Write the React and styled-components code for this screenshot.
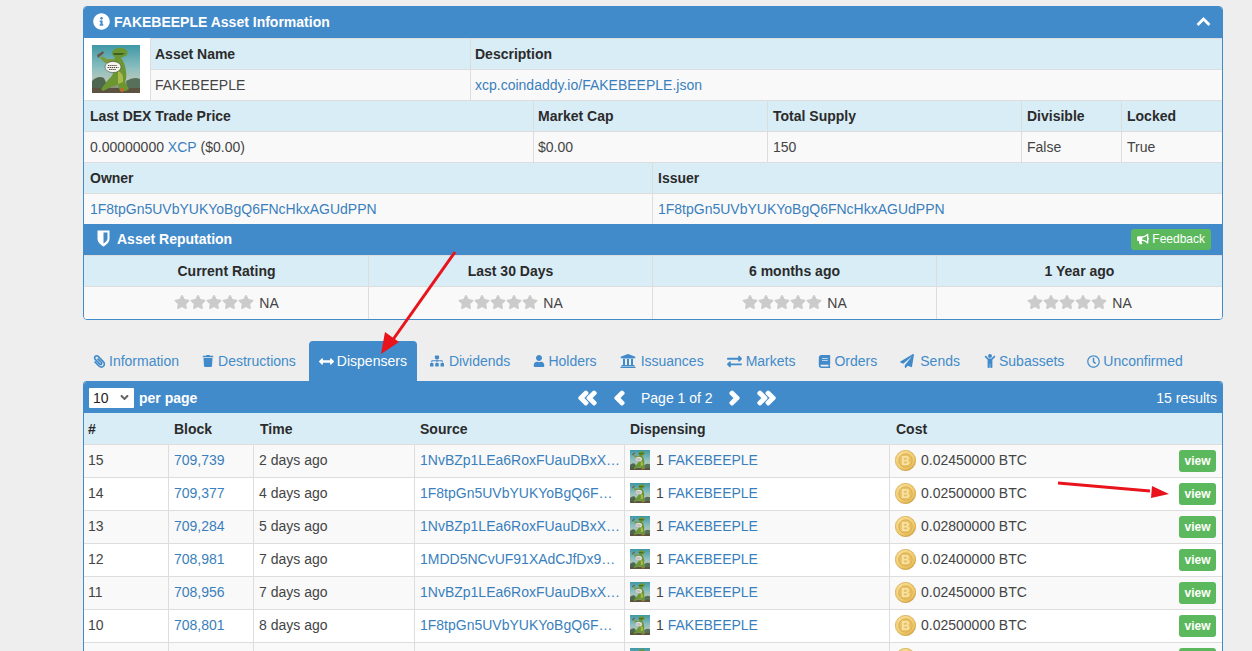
import React from 'react';
import styled, { createGlobalStyle } from 'styled-components';
import {
  FaInfoCircle, FaChevronUp, FaBullhorn, FaStar, FaPaperclip, FaTrash, FaArrowsAltH,
  FaSitemap, FaUser, FaUniversity, FaExchangeAlt, FaBook, FaPaperPlane, FaChild, FaRegClock,
  FaAngleDoubleLeft, FaAngleDoubleRight, FaAngleLeft, FaAngleRight, FaAngleDown,
} from 'react-icons/fa';

const GlobalStyle = createGlobalStyle`
  html, body {
    margin: 0;
    height: 651px;
    overflow: hidden;
    background: #eeeeee;
    font-family: "Liberation Sans", Arial, sans-serif;
    font-size: 14px;
    color: #333;
  }
  * { box-sizing: border-box; }
`;

const Page = styled.div`
  position: relative;
  padding: 6px 29px 0 83px;
  height: 651px;
  overflow: hidden;
`;

const Panel = styled.div`
  border: 1px solid #428bca;
  border-radius: 4px;
  background: #fff;
  overflow: hidden;
`;

const PanelHead = styled.div`
  display: flex;
  align-items: center;
  justify-content: space-between;
  height: ${(p) => p.$h || 31}px;
  padding: ${(p) => p.$pad || '0 10px 0 9px'};
  background: #428bca;
  color: #fff;
  font-weight: bold;
`;

const HeadTitle = styled.div`
  display: flex;
  align-items: center;
  gap: ${(p) => p.$gap || 4}px;
  padding-bottom: 2px;
  svg { font-size: 17px; }
`;

const Collapse = styled.span`
  display: flex;
  margin-right: 1px;
  padding-bottom: 2px;
  font-size: 15px;
  svg { stroke: #fff; stroke-width: 25; }
`;

const FeedbackBtn = styled.span`
  display: flex;
  align-items: center;
  gap: 3px;
  height: 21px;
  margin-bottom: 1px;
  padding: 0 6px;
  background: #5cb85c;
  border-radius: 3px;
  font-size: 12px;
  font-weight: normal;
  svg { font-size: 12px; }
`;

const Row = styled.div`
  display: grid;
  grid-template-columns: ${(p) => p.$cols};
  height: ${(p) => p.$h || 31}px;
`;

const Cell = styled.div`
  display: flex;
  align-items: center;
  justify-content: ${(p) => (p.$center ? 'center' : 'flex-start')};
  padding: 0 ${(p) => p.$padX ?? 5}px;
  background: ${(p) => (p.$head ? '#d9edf7' : '#f9f9f9')};
  font-weight: ${(p) => (p.$head ? 'bold' : 'normal')};
  color: ${(p) => (p.$head ? '#2b2b2b' : '#444')};
  border-top: 1px solid #dddddd;
  border-left: 1px solid ${(p) => (p.$first ? 'transparent' : '#dddddd')};
  white-space: pre;
`;

const Link = styled.span`
  color: #3a7fbd;
`;

const TopBlock = styled.div`
  display: grid;
  grid-template-columns: 66px 1fr;
`;

const ThumbCell = styled.div`
  display: flex;
  align-items: center;
  justify-content: center;
  height: 62px;
  padding-right: 2px;
  background: #fff;
`;

const Stars = styled.span`
  display: inline-flex;
  margin: 0 5px 3px 0;
  color: #cbcbcb;
  svg { font-size: 16px; width: 16px; }
`;

const Tabs = styled.nav`
  display: flex;
  gap: 3px;
  margin-top: 21px;
  height: 40px;
`;

const Tab = styled.div`
  display: flex;
  align-items: center;
  padding: 0 10px;
  border-radius: 4px 4px 0 0;
  background: ${(p) => (p.$active ? '#428bca' : 'transparent')};
  color: ${(p) => (p.$active ? '#fff' : '#428bca')};
`;

const TabIcon = styled.span`
  display: flex;
  flex: none;
  width: ${(p) => p.$lead}px;
  svg {
    font-size: ${(p) => p.$size || 13}px;
    transform: ${(p) => (p.$flip ? 'scaleX(-1)' : 'none')};
  }
`;

const ListPanel = styled(Panel)`
  border-bottom: 0;
  border-radius: 4px 4px 0 0;
`;

const ListHead = styled(PanelHead)`
  display: grid;
  grid-template-columns: 488px auto 1fr;
  font-weight: normal;
`;

const PerPage = styled.div`
  display: flex;
  align-items: center;
  gap: 5px;
  font-weight: bold;
`;

const FakeSelect = styled.div`
  display: flex;
  align-items: center;
  justify-content: space-between;
  width: 45px;
  height: 20px;
  padding: 0 3px 0 4px;
  background: #fff;
  border-radius: 1px;
  color: #222;
  font-weight: normal;
  svg { font-size: 13px; color: #666; }
`;

const Pager = styled.div`
  display: flex;
  align-items: center;
  gap: 16px;
`;

const PagerIcon = styled.span`
  display: flex;
  justify-content: center;
  width: ${(p) => p.$w}px;
  svg { font-size: 22px; stroke: #fff; stroke-width: 34; }
`;

const Results = styled.div`
  text-align: right;
`;

const Columns = '84px 85px 161px 210px 265px 1fr';

const DataRow = styled.div`
  display: grid;
  grid-template-columns: ${Columns};
  height: 33px;
  background: ${(p) => (p.$striped ? '#f9f9f9' : '#fff')};
  border-top: 1px solid #dddddd;
`;

const HeadRow = styled.div`
  display: grid;
  grid-template-columns: ${Columns};
  height: 31px;
  background: #d9edf7;
  font-weight: bold;
  color: #2b2b2b;
`;

const HeadCell = styled.div`
  display: flex;
  align-items: center;
  padding-left: ${(p) => p.$pad ?? 6}px;
`;

const DataCell = styled.div`
  display: flex;
  align-items: center;
  gap: 6px;
  min-width: 0;
  padding: 0 ${(p) => p.$padEnd ?? 6}px 2px ${(p) => p.$pad ?? 5}px;
  color: #444;
  white-space: nowrap;
  border-left: ${(p) => (p.$line ? '1px solid #dddddd' : '0')};
`;

const Truncate = styled(Link)`
  overflow: hidden;
  text-overflow: ellipsis;
`;

const ViewBtn = styled.span`
  display: flex;
  align-items: center;
  justify-content: center;
  flex: none;
  width: 37px;
  height: 22px;
  margin: 2px 0 0 auto;
  background: #5cb85c;
  border-radius: 3px;
  color: #fff;
  font-size: 12px;
  font-weight: bold;
`;

const ArrowLayer = styled.svg`
  position: absolute;
  inset: 0;
  pointer-events: none;
`;

const ShieldIcon = () => (
  <svg width="13" height="17" viewBox="0 0 13 17">
    <path d="M0.5 0.5 H12.5 V8.5 C12.5 12.5 9 15 6.5 16.5 C4 15 0.5 12.5 0.5 8.5Z" fill="#fff" />
    <path d="M6.5 2.5 H10.5 V8.5 C10.5 10.5 8.5 12.4 6.5 13.6Z" fill="#428bca" />
  </svg>
);

const Thumb = ({ size }) => (
  <svg width={size} height={size} viewBox="0 0 48 48" style={{ flex: 'none' }}>
    <defs>
      <linearGradient id="sky" x1="0" y1="0" x2="0" y2="1">
        <stop offset="0" stopColor="#3f98a6" />
        <stop offset="0.5" stopColor="#8fc0c0" />
        <stop offset="0.72" stopColor="#b4c6b8" />
        <stop offset="1" stopColor="#6d6a52" />
      </linearGradient>
    </defs>
    <rect width="48" height="48" fill="url(#sky)" />
    <path d="M0 36 Q6 30 12 33 L15 40 L10 48 L0 48Z" fill="#4f6750" />
    <path d="M34 36 Q42 31 48 34 V48 H36Z" fill="#56705a" />
    <path d="M0 43 H48 V48 H0Z" fill="#5b5340" />
    <path d="M20 7 Q23 2 31 3 Q37 5 35 10 L29 13 Q33 18 34 26 Q35 33 33 37 L37 44 Q34 47 28 46 L26 40 L19 42 L11 46 L9 44 L16 35 Q22 30 22 23 L21 17 L23 12 Q20 11 20 7Z" fill="#6b9632" />
    <path d="M26 26 Q32 28 31 37 L26 39Z" fill="#a9bb4c" />
    <path d="M22 18 L13 18 L8 13 L10 11 L15 14 L23 14Z" fill="#7c9a3e" />
    <path d="M5 10 L11 6 L12 8 L6 13Z" fill="#6a5744" />
    <path d="M21 8 L33 8 L30 10 L22 10Z" fill="#3e6022" />
    <ellipse cx="21" cy="22" rx="8" ry="5.6" fill="#f6f3ea" stroke="#333" strokeWidth="0.5" />
    <path d="M16 20.5h9M15.5 22.5h11M17 24.5h7" stroke="#333" strokeWidth="0.9" strokeDasharray="1.4 0.7" />
    <circle cx="30" cy="45" r="2" fill="#c8662a" />
  </svg>
);

const Coin = () => (
  <svg width="21" height="21" viewBox="0 0 21 21" style={{ flex: 'none', marginRight: -1 }}>
    <defs>
      <radialGradient id="gold" cx="0.4" cy="0.35" r="0.75">
        <stop offset="0" stopColor="#fbe7a8" />
        <stop offset="0.7" stopColor="#efca6c" />
        <stop offset="1" stopColor="#c99632" />
      </radialGradient>
    </defs>
    <circle cx="10.5" cy="10.5" r="10.2" fill="url(#gold)" stroke="#c2902f" strokeWidth="0.5" />
    <circle cx="10.5" cy="10.5" r="6.8" fill="#e9c064" stroke="#d3a344" strokeWidth="0.7" />
    <text x="10.5" y="14.6" textAnchor="middle" fontSize="12" fontWeight="bold" fontFamily="Liberation Sans" fill="#f8e4a6">B</text>
  </svg>
);

// lead = distance from the icon's left edge to the label
const tabs = [
  { label: 'Information', Icon: FaPaperclip, lead: 16, flip: true },
  { label: 'Destructions', Icon: FaTrash, lead: 16, size: 12 },
  { label: 'Dispensers', Icon: FaArrowsAltH, lead: 18, size: 15, active: true },
  { label: 'Dividends', Icon: FaSitemap, lead: 19, size: 14 },
  { label: 'Holders', Icon: FaUser, lead: 15, size: 12 },
  { label: 'Issuances', Icon: FaUniversity, lead: 21, size: 16 },
  { label: 'Markets', Icon: FaExchangeAlt, lead: 19, size: 15 },
  { label: 'Orders', Icon: FaBook, lead: 16, size: 13 },
  { label: 'Sends', Icon: FaPaperPlane, lead: 20, size: 14 },
  { label: 'Subassets', Icon: FaChild, lead: 16, size: 14 },
  { label: 'Unconfirmed', Icon: FaRegClock, lead: 16, size: 13 },
];

const NV = '1NvBZp1LEa6RoxFUauDBxXRDnGj4ZXzNQs';
const F8 = '1F8tpGn5UVbYUKYoBgQ6FNcHkxAGUdPPN';

const rows = [
  ['15', '709,739', '2 days ago', NV, '0.02450000'],
  ['14', '709,377', '4 days ago', F8, '0.02500000'],
  ['13', '709,284', '5 days ago', NV, '0.02800000'],
  ['12', '708,981', '7 days ago', '1MDD5NCvUF91XAdCJfDx9QhLYxZkR7Ngz', '0.02400000'],
  ['11', '708,956', '7 days ago', NV, '0.02450000'],
  ['10', '708,801', '8 days ago', F8, '0.02500000'],
  ['', '', '', '', ''],
];

const ratings = ['Current Rating', 'Last 30 Days', '6 months ago', '1 Year ago'];
const ratingCols = '284px 284px 284px 1fr';
const statCols = '449px 234px 254px 100px 1fr';

const App = () => (
  <>
    <GlobalStyle />
    <Page>
      <Panel>
        <PanelHead>
          <HeadTitle>
            <FaInfoCircle />
            FAKEBEEPLE Asset Information
          </HeadTitle>
          <Collapse><FaChevronUp /></Collapse>
        </PanelHead>
        <TopBlock>
          <ThumbCell><Thumb size={48} /></ThumbCell>
          <div>
            <Row $cols="320px 1fr">
              <Cell $head $padX={4}>Asset Name</Cell>
              <Cell $head $padX={4}>Description</Cell>
            </Row>
            <Row $cols="320px 1fr">
              <Cell $padX={4}>FAKEBEEPLE</Cell>
              <Cell $padX={4}><Link>xcp.coindaddy.io/FAKEBEEPLE.json</Link></Cell>
            </Row>
          </div>
        </TopBlock>
        <Row $cols={statCols}>
          <Cell $head $first>Last DEX Trade Price</Cell>
          <Cell $head $padX={4}>Market Cap</Cell>
          <Cell $head>Total Supply</Cell>
          <Cell $head>Divisible</Cell>
          <Cell $head>Locked</Cell>
        </Row>
        <Row $cols={statCols}>
          <Cell $first>0.00000000 <Link>XCP</Link> ($0.00)</Cell>
          <Cell $padX={4}>$0.00</Cell>
          <Cell>150</Cell>
          <Cell>False</Cell>
          <Cell>True</Cell>
        </Row>
        <Row $cols="568px 1fr">
          <Cell $head $first>Owner</Cell>
          <Cell $head>Issuer</Cell>
        </Row>
        <Row $cols="568px 1fr">
          <Cell $first><Link>{F8}</Link></Cell>
          <Cell><Link>{F8}</Link></Cell>
        </Row>
        <PanelHead $pad="0 11px 0 13px">
          <HeadTitle $gap={7}>
            <ShieldIcon />
            Asset Reputation
          </HeadTitle>
          <FeedbackBtn><FaBullhorn />Feedback</FeedbackBtn>
        </PanelHead>
        <Row $cols={ratingCols}>
          {ratings.map((r, i) => <Cell key={r} $head $center $first={i === 0}>{r}</Cell>)}
        </Row>
        <Row $cols={ratingCols} $h={33}>
          {ratings.map((r, i) => (
            <Cell key={r} $center $first={i === 0}>
              <Stars>{[0, 1, 2, 3, 4].map((s) => <FaStar key={s} />)}</Stars>
              NA
            </Cell>
          ))}
        </Row>
      </Panel>

      <Tabs>
        {tabs.map(({ label, Icon, lead, size, flip, active }) => (
          <Tab key={label} $active={active}>
            <TabIcon $lead={lead} $size={size} $flip={flip}><Icon /></TabIcon>
            {label}
          </Tab>
        ))}
      </Tabs>

      <ListPanel>
        <ListHead $pad="0 5px">
          <PerPage>
            <FakeSelect>10<FaAngleDown /></FakeSelect>
            per page
          </PerPage>
          <Pager>
            <PagerIcon $w={21}><FaAngleDoubleLeft /></PagerIcon>
            <PagerIcon $w={11}><FaAngleLeft /></PagerIcon>
            <span>Page 1 of 2</span>
            <PagerIcon $w={11}><FaAngleRight /></PagerIcon>
            <PagerIcon $w={21}><FaAngleDoubleRight /></PagerIcon>
          </Pager>
          <Results>15 results</Results>
        </ListHead>
        <HeadRow>
          <HeadCell $pad={4}>#</HeadCell>
          <HeadCell>Block</HeadCell>
          <HeadCell $pad={7}>Time</HeadCell>
          <HeadCell>Source</HeadCell>
          <HeadCell>Dispensing</HeadCell>
          <HeadCell $pad={7}>Cost</HeadCell>
        </HeadRow>
        {rows.map(([num, block, time, source, cost], i) => (
          <DataRow key={i} $striped={i % 2 === 0}>
            <DataCell $pad={4}>{num}</DataCell>
            <DataCell $line><Link>{block}</Link></DataCell>
            <DataCell $line>{time}</DataCell>
            <DataCell $line $padEnd={4}><Truncate>{source}</Truncate></DataCell>
            <DataCell $line><Thumb size={20} />{cost && <span>1 <Link>FAKEBEEPLE</Link></span>}</DataCell>
            <DataCell $line>
              <Coin />{cost && `${cost} BTC`}
              <ViewBtn>view</ViewBtn>
            </DataCell>
          </DataRow>
        ))}
      </ListPanel>

      <ArrowLayer width="1252" height="651" viewBox="0 0 1252 651">
        <path d="M455 252 L392 341" stroke="#e8131b" strokeWidth="3" />
        <path d="M381 354 L385 332 L399 342Z" fill="#e8131b" />
        <path d="M1058 483 L1150 491" stroke="#e8131b" strokeWidth="3" />
        <path d="M1169 494 L1152 486 L1151 498Z" fill="#e8131b" />
      </ArrowLayer>
    </Page>
  </>
);

export default App;
